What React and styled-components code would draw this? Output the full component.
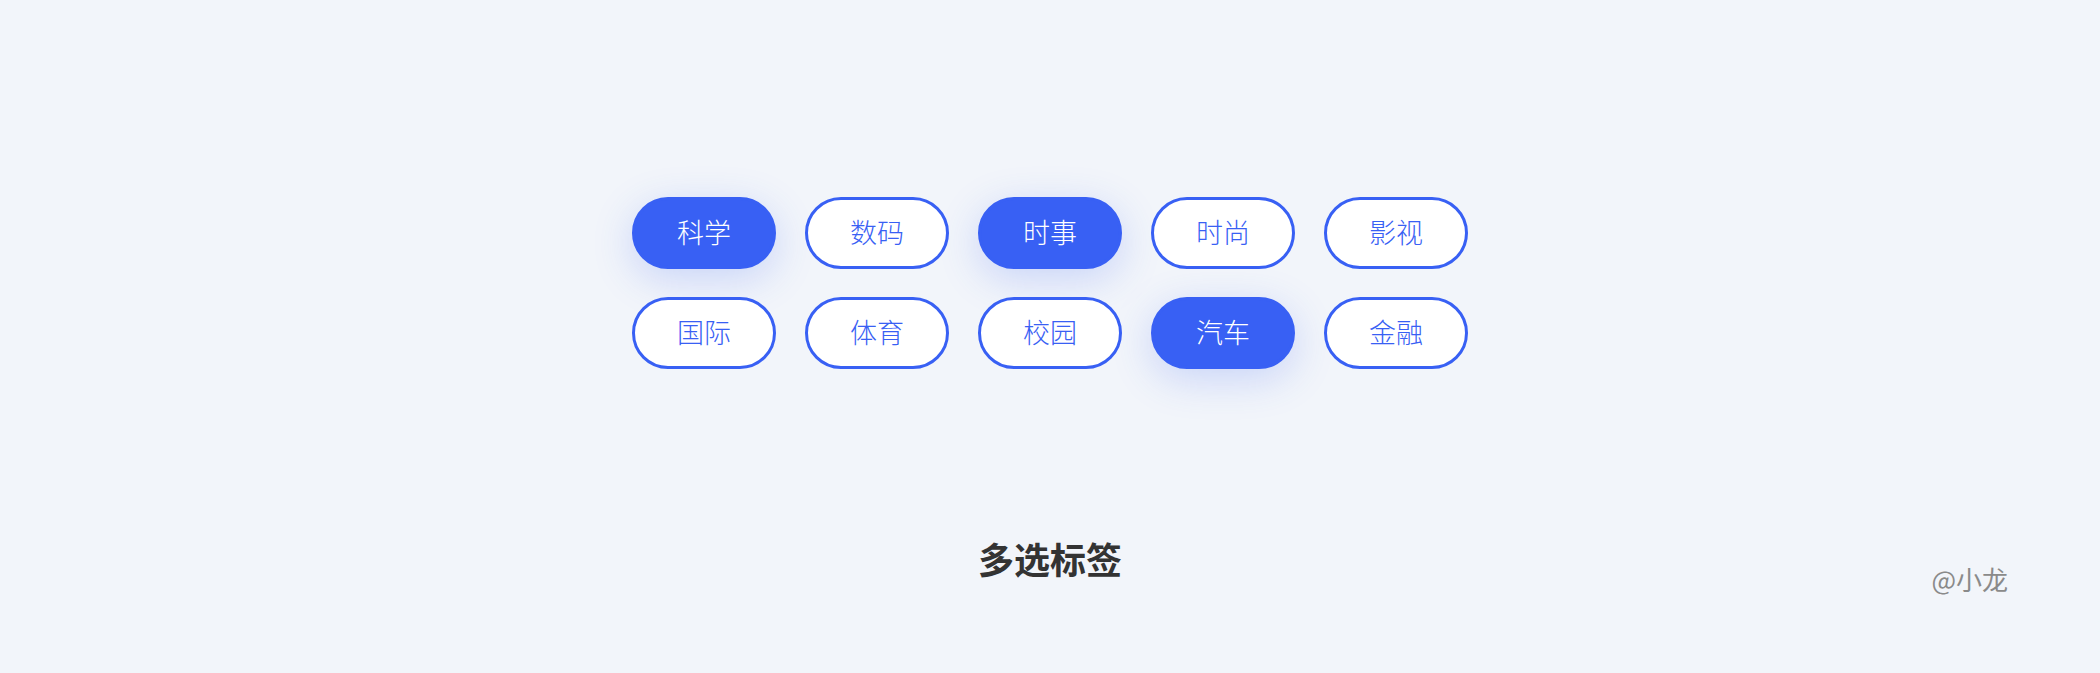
import React, { useState } from "react";
import styled, { createGlobalStyle, css } from "styled-components";

const Global = createGlobalStyle`
  html, body { margin: 0; padding: 0; background: #f2f5fa; }
  body { font-family: "Noto Sans CJK SC", "Noto Sans", sans-serif; }
`;

const Page = styled.div`
  width: 2100px;
  height: 673px;
  background: #f2f5fa;
  display: flex;
  flex-direction: column;
  align-items: stretch;
  box-sizing: border-box;
  padding-top: 197px;
  overflow: hidden;
`;

const TagGrid = styled.div`
  display: grid;
  grid-template-columns: repeat(5, 144px);
  column-gap: 29px;
  row-gap: 28px;
  justify-content: center;
`;

const Tag = styled.button`
  box-sizing: border-box;
  width: 144px;
  height: 72px;
  border-radius: 36px;
  border: 3px solid #3860f4;
  background: #ffffff;
  color: #3860f4;
  font-family: "Noto Sans CJK SC", "Noto Sans", sans-serif;
  font-size: 27px;
  font-weight: 300;
  line-height: 1;
  display: flex;
  align-items: center;
  justify-content: center;
  padding: 0 0 4px 0;
  cursor: pointer;
  ${(p) =>
    p.$active &&
    css`
      background: #3860f4;
      color: #ffffff;
      box-shadow: 0 10px 40px rgba(56, 96, 244, 0.22);
    `}
`;

const Footer = styled.div`
  margin-top: 164px;
  display: grid;
  grid-template-columns: 1fr auto 1fr;
  align-items: start;
`;

const Title = styled.div`
  grid-column: 2;
  font-size: 36px;
  font-weight: 700;
  line-height: 50px;
  color: #333333;
`;

const Watermark = styled.div`
  grid-column: 3;
  justify-self: end;
  margin-top: 28px;
  margin-right: 92px;
  font-size: 26px;
  line-height: 36px;
  color: #8a8a8a;
`;

const TAGS = ["科学", "数码", "时事", "时尚", "影视", "国际", "体育", "校园", "汽车", "金融"];

export default function App() {
  const [selected, setSelected] = useState(new Set(["科学", "时事", "汽车"]));
  const toggle = (t) => {
    const next = new Set(selected);
    next.has(t) ? next.delete(t) : next.add(t);
    setSelected(next);
  };
  return (
    <>
      <Global />
      <Page>
        <TagGrid>
          {TAGS.map((t) => (
            <Tag key={t} $active={selected.has(t)} onClick={() => toggle(t)}>
              {t}
            </Tag>
          ))}
        </TagGrid>
        <Footer>
          <Title>多选标签</Title>
          <Watermark>@小龙</Watermark>
        </Footer>
      </Page>
    </>
  );
}
